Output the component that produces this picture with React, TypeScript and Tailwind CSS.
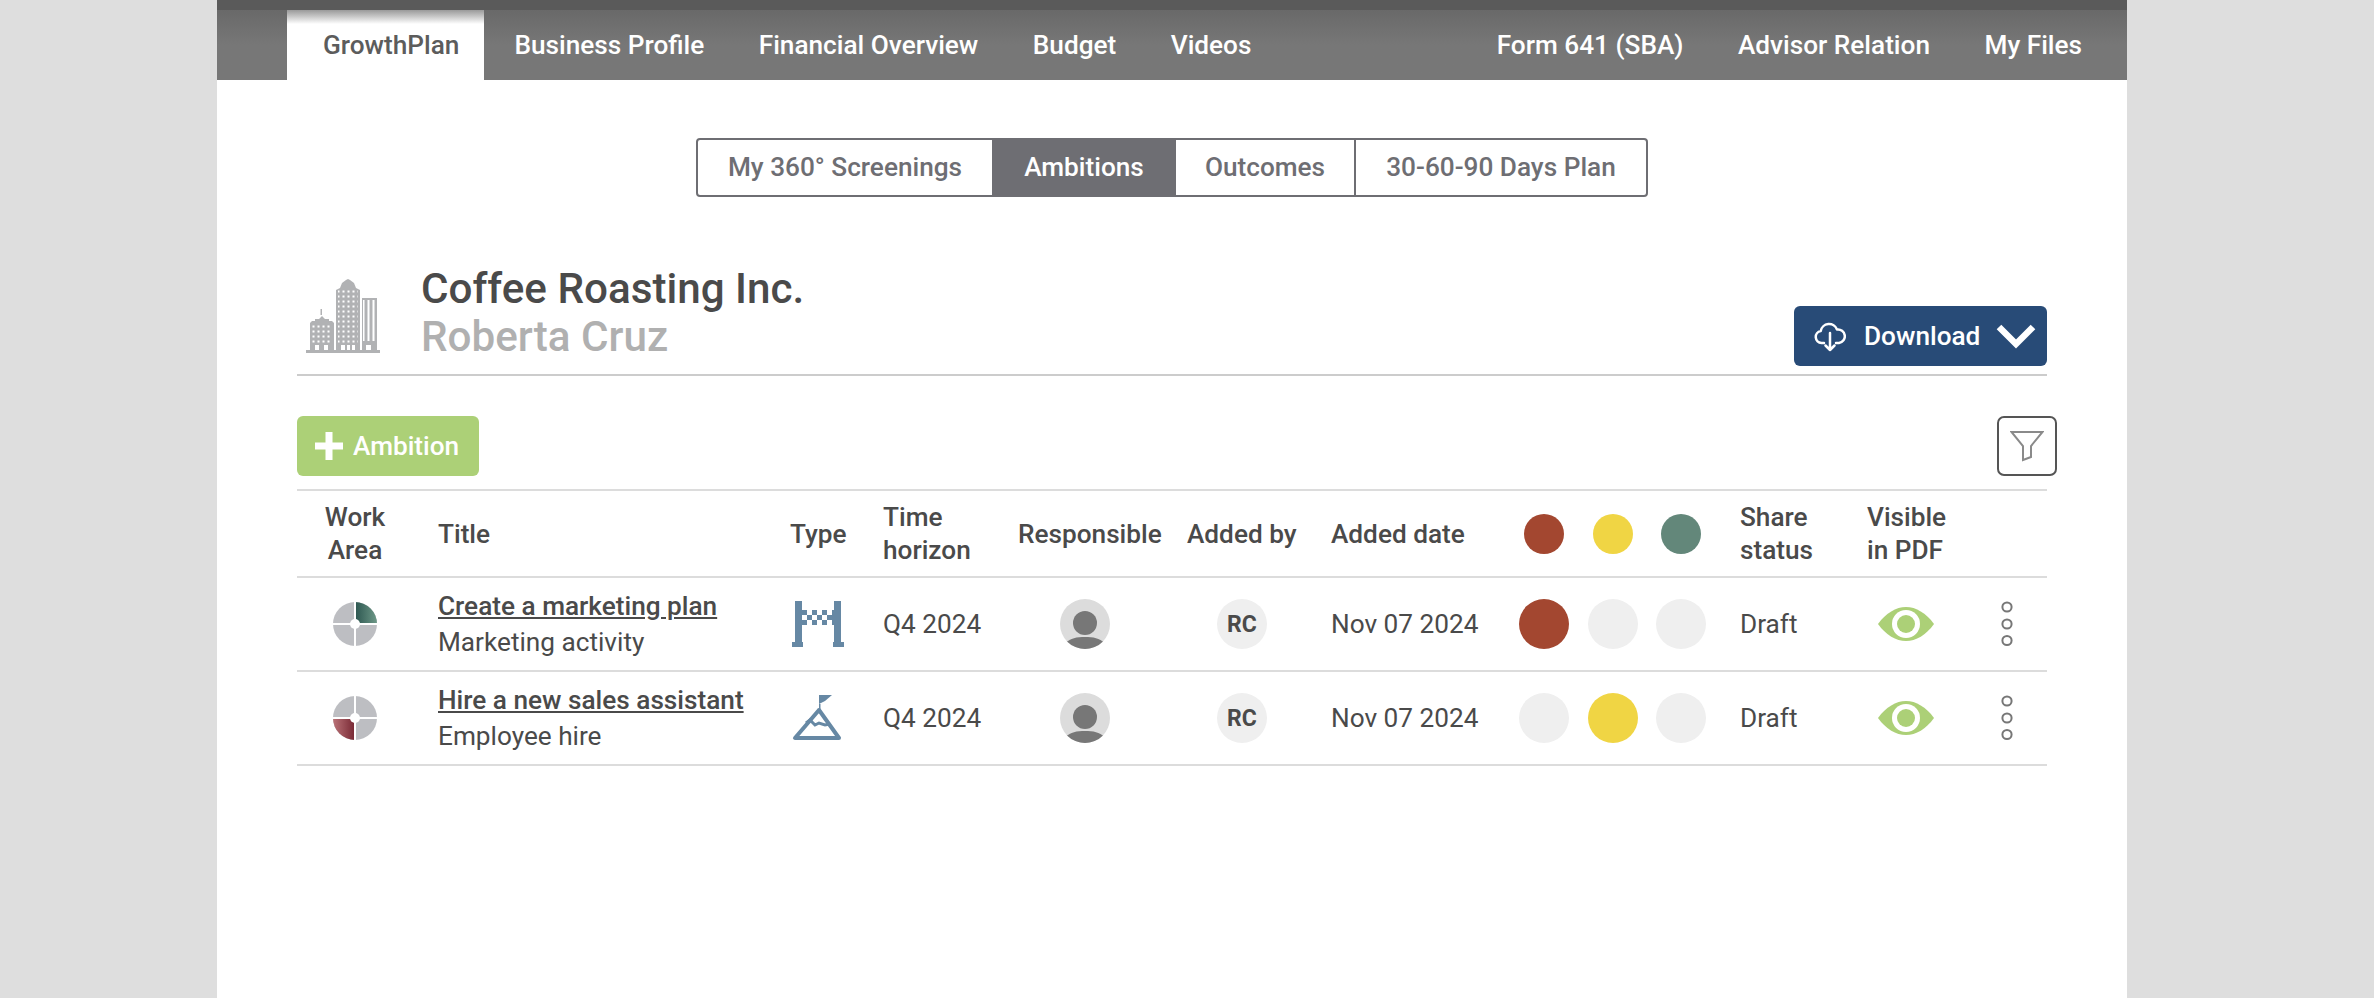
const rowGrid =
  "grid grid-cols-[116px_377px_93px_135px_169px_144px_188px_221px_127px_123px_57px] items-center";

function Buildings() {
  return (
    <svg width="74" height="74" viewBox="0 0 74 74" className="mb-[21px] ml-[9px]">
      <defs>
        <pattern id="win" width="5" height="5" patternUnits="userSpaceOnUse">
          <rect x="1.500" y="1.500" width="2" height="2" fill="#fff" />
        </pattern>
        <pattern id="stripe" width="5" height="5" patternUnits="userSpaceOnUse">
          <rect x="1.500" y="0" width="2" height="5" fill="#fff" />
        </pattern>
      </defs>
      <g fill="#b1b2b4">
        <rect x="0" y="71" width="74" height="3" />
        <rect x="14.500" y="30" width="1.500" height="6" />
        <path d="M4 72V44l2-2h3v-2h4l3-3 3 3h4v2h3l2 2v28z" />
        <path d="M30 72V11l2-1 2-1 2-5 4-3 2-1 2 1 4 3 2 5 2 1 2 1v61z" />
        <rect x="56" y="19" width="15" height="53" />
      </g>
      <rect x="6" y="45" width="20" height="20" fill="url(#win)" />
      <rect x="32" y="10" width="20" height="55" fill="url(#win)" />
      <rect x="57" y="21" width="13" height="41" fill="url(#stripe)" />
      <g fill="#fff">
        <rect x="9" y="66" width="4" height="5" />
        <rect x="18" y="66" width="4" height="5" />
        <rect x="35" y="66" width="4" height="5" />
        <rect x="41" y="66" width="3" height="5" />
        <rect x="46" y="66" width="3" height="5" />
        <rect x="60" y="66" width="5" height="5" />
      </g>
    </svg>
  );
}

function WorkArea({ quadrant }: { quadrant: "green" | "red" }) {
  return (
    <svg width="44" height="44" viewBox="0 0 44 44">
      <defs>
        <linearGradient id="gGreen" x1="0" y1="0" x2="1" y2="0">
          <stop offset="0" stopColor="#2c5650" />
          <stop offset="1" stopColor="#6d9887" />
        </linearGradient>
        <linearGradient id="gRed" x1="0" y1="0" x2="1" y2="0">
          <stop offset="0" stopColor="#ba7277" />
          <stop offset="1" stopColor="#772733" />
        </linearGradient>
      </defs>
      <circle cx="22" cy="22" r="22" fill="#bdbec2" />
      {quadrant === "green" ? (
        <path d="M22 22V0a22 22 0 0 1 22 22z" fill="url(#gGreen)" />
      ) : (
        <path d="M22 22v22A22 22 0 0 1 0 22z" fill="url(#gRed)" />
      )}
      <rect x="21" y="0" width="2" height="44" fill="#fff" />
      <rect x="0" y="21" width="44" height="2" fill="#fff" />
      <circle cx="22" cy="22" r="5" fill="#fff" />
    </svg>
  );
}

function FinishGate() {
  return (
    <svg width="52" height="46" viewBox="0 0 52 46" className="ml-[2px]">
      <g fill="#6688a4">
        <rect x="3" y="0" width="7" height="41" />
        <rect x="42" y="0" width="7" height="41" />
        <rect x="0" y="41" width="11" height="5" />
        <rect x="41" y="41" width="11" height="5" />
        <path d="M10 9h32v15H10z" />
      </g>
      <g fill="#fff">
        <rect x="15" y="9" width="5" height="5" />
        <rect x="25" y="9" width="5" height="5" />
        <rect x="35" y="9" width="5" height="5" />
        <rect x="10" y="14" width="5" height="5" />
        <rect x="20" y="14" width="5" height="5" />
        <rect x="30" y="14" width="5" height="5" />
        <rect x="15" y="19" width="5" height="5" />
        <rect x="25" y="19" width="5" height="5" />
        <rect x="35" y="19" width="5" height="5" />
      </g>
    </svg>
  );
}

function Mountain() {
  return (
    <svg width="50" height="46" viewBox="0 0 50 46" className="ml-[2px]">
      <path d="M27 0h13l-7 6-6 3z" fill="#6688a4" />
      <path d="M27 9h1.500v5h-1.500z" fill="#6688a4" />
      <path
        d="M27 15L3 43h44z"
        fill="none"
        stroke="#6688a4"
        strokeWidth="4"
        strokeLinejoin="round"
      />
      <path d="M14 28l4-3 5 5 4-2 6 2 5-1" fill="none" stroke="#6688a4" strokeWidth="3" />
    </svg>
  );
}

function Avatar() {
  return (
    <div className="ml-[42px] size-[50px] overflow-hidden rounded-full bg-[#dcdcdc]">
      <svg width="50" height="50" viewBox="0 0 50 50">
        <circle cx="25" cy="24" r="12" fill="#777" />
        <path d="M6 44c4-5 11-6 19-6s15 1 19 6c-4 4-11 6-19 6s-15-2-19-6z" fill="#777" />
      </svg>
    </div>
  );
}

function Initials() {
  return (
    <div className="ml-[30px] flex size-[50px] items-center justify-center rounded-full bg-[#efefef] pt-[2px] text-[23px] font-bold text-[#4a4a4a]">
      RC
    </div>
  );
}

function Eye() {
  return (
    <svg width="56" height="34" viewBox="0 0 56 34" className="ml-[11px]">
      <path d="M0 17C8 6 18 0 28 0s20 6 28 17C48 28 38 34 28 34S8 28 0 17z" fill="#acd077" />
      <circle cx="28" cy="17" r="14" fill="#fff" />
      <circle cx="28" cy="17" r="9" fill="#acd077" />
    </svg>
  );
}

function Kebab() {
  return (
    <svg width="12" height="46" viewBox="0 0 12 46" className="ml-[11px]">
      <g fill="none" stroke="#777" strokeWidth="2">
        <circle cx="6" cy="6" r="4.600" />
        <circle cx="6" cy="23" r="4.600" />
        <circle cx="6" cy="39.500" r="4.600" />
      </g>
    </svg>
  );
}

const rows = [
  {
    title: "Create a marketing plan",
    kind: "Marketing activity",
    quadrant: "green" as const,
    icon: <FinishGate />,
    picked: 0,
  },
  {
    title: "Hire a new sales assistant",
    kind: "Employee hire",
    quadrant: "red" as const,
    icon: <Mountain />,
    picked: 1,
  },
];

const pickColors = ["bg-[#a34730]", "bg-[#f0d544]", "bg-[#63877a]"];

export default function App() {
  return (
    <div className="min-h-[998px] bg-[#dedede] font-['Roboto',sans-serif]">
      <div className="ml-[217px] min-h-[998px] w-[1910px] bg-white">
        <div className="h-[10px] bg-[#5a5a5a]" />
        <nav className="flex h-[70px] items-center justify-between bg-gradient-to-b from-[#696969] via-[#777] to-[#777] pr-[45px] pl-[70px] text-[26.200px] font-medium text-white">
          <div className="flex h-full items-center">
            <div className="flex h-full items-center bg-gradient-to-b from-[#9a9a9a] via-white via-[20%] to-white pt-[2px] pr-[25px] pl-[36px] text-[#5c5c5c]">
              GrowthPlan
            </div>
            <div className="flex items-center gap-[54.500px] pt-[2px] pl-[30px]">
              <span>Business Profile</span>
              <span>Financial Overview</span>
              <span>Budget</span>
              <span>Videos</span>
            </div>
          </div>
          <div className="flex items-center gap-[54.500px] pt-[2px]">
            <span>Form 641 (SBA)</span>
            <span>Advisor Relation</span>
            <span>My Files</span>
          </div>
        </nav>

        <div className="mt-[58px] flex justify-center">
          <div className="flex h-[59px] items-stretch rounded-[4px] border-2 border-[#6e6e73] text-[26.200px] font-medium text-[#6e6e73]">
            <div className="flex w-[294px] items-center justify-center">My 360° Screenings</div>
            <div className="flex w-[184px] items-center justify-center bg-[#6e6e73] text-white">Ambitions</div>
            <div className="flex w-[180px] items-center justify-center border-r-2 border-[#6e6e73]">Outcomes</div>
            <div className="flex w-[290px] items-center justify-center">30-60-90 Days Plan</div>
          </div>
        </div>

        <div className="px-[80px]">
          <div className="mt-[70px] flex h-[109px] items-end justify-between border-b-2 border-[#cccccc]">
            <div className="flex items-end">
              <Buildings />
              <div className="mb-[13px] ml-[41px] text-[42.200px] leading-[48px] font-medium">
                <div className="text-[#4a4a4a]">Coffee Roasting Inc.</div>
                <div className="text-[#b0b0b0]">Roberta Cruz</div>
              </div>
            </div>
            <button className="mb-[8px] flex h-[60px] w-[253px] items-center rounded-[6px] bg-[#284b77] pl-[20px] text-[26.200px] font-medium text-white">
              <svg width="32" height="32" viewBox="0 0 32 32" fill="none" stroke="#fff" strokeWidth="2.500" strokeLinecap="round" strokeLinejoin="round">
                <path d="M10 23H7.500a6 6 0 0 1-.8-11.900A8.500 8.500 0 0 1 23 9.500a6.800 6.800 0 0 1 2 13.500h-3" />
                <path d="M16 13v17M11.500 25.500l4.500 4.500 4.500-4.500" />
              </svg>
              <span className="ml-[18px] pt-[1px]">Download</span>
              <svg width="40" height="25" viewBox="0 0 40 25" className="ml-[16px]">
                <path d="M3 3l17 17L37 3" fill="none" stroke="#fff" strokeWidth="6.500" />
              </svg>
            </button>
          </div>

          <div className="mt-[40px] flex items-start justify-between">
            <button className="flex h-[60px] w-[182px] items-center rounded-[6px] bg-[#acd077] pl-[18px] text-[26.200px] font-medium text-white">
              <svg width="28" height="28" viewBox="0 0 28 28">
                <path d="M10.500 0h7v10.500H28v7H17.500V28h-7V17.500H0v-7h10.500z" fill="#fff" />
              </svg>
              <span className="ml-[10px] pt-[1px]">Ambition</span>
            </button>
            <button className="-mr-[10px] flex size-[60px] items-center justify-center rounded-[7px] border-2 border-[#555]">
              <svg width="34" height="32" viewBox="0 0 34 32" fill="none" stroke="#8a8a8a" strokeWidth="2">
                <path d="M1.500 2h31L21 16v11l-8 3V16z" />
              </svg>
            </button>
          </div>

          <div className="mt-[13px] text-[26.200px] text-[#4a4a4a]">
            <div className={`${rowGrid} h-[89px] border-y-2 border-[#dcdcdc] leading-[33px] font-medium`}>
              <div className="pt-[1px] text-center">Work<br />Area</div>
              <div className="pt-[1px] pl-[25px]">Title</div>
              <div className="pt-[1px]">Type</div>
              <div className="pt-[1px]">Time<br />horizon</div>
              <div className="pt-[1px]">Responsible</div>
              <div className="pt-[1px]">Added by</div>
              <div className="pt-[1px]">Added date</div>
              <div className="flex gap-[18.500px]">
                {pickColors.map((c) => (
                  <div key={c} className="flex w-[50px] shrink-0 justify-center">
                    <div className={`size-[40px] rounded-full ${c}`} />
                  </div>
                ))}
              </div>
              <div className="pt-[1px]">Share<br />status</div>
              <div className="pt-[1px]">Visible<br />in PDF</div>
              <div />
            </div>

            {rows.map((r) => (
              <div key={r.title} className={`${rowGrid} h-[94px] border-b-2 border-[#dcdcdc]`}>
                <div className="flex justify-center">
                  <WorkArea quadrant={r.quadrant} />
                </div>
                <div className="pl-[25px] leading-[36px]">
                  <div className="font-medium underline">{r.title}</div>
                  <div>{r.kind}</div>
                </div>
                <div>{r.icon}</div>
                <div className="pt-[2px]">Q4 2024</div>
                <div><Avatar /></div>
                <div><Initials /></div>
                <div className="pt-[2px]">Nov 07 2024</div>
                <div className="flex gap-[18.500px]">
                  {pickColors.map((c, i) => (
                    <div key={c} className={`size-[50px] shrink-0 rounded-full ${i === r.picked ? c : "bg-[#efefef]"}`} />
                  ))}
                </div>
                <div className="pt-[2px]">Draft</div>
                <div><Eye /></div>
                <div className="flex items-center"><Kebab /></div>
              </div>
            ))}
          </div>
        </div>
      </div>
    </div>
  );
}
